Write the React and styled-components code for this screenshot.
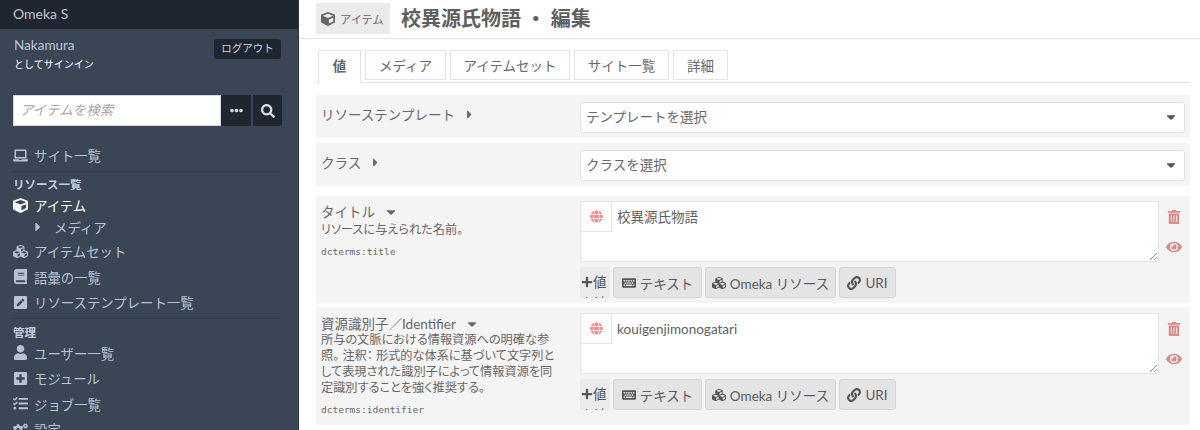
import React from 'react';
import styled, { createGlobalStyle } from 'styled-components';
import { FaCube, FaLaptop, FaCubes, FaBook, FaPenSquare, FaUser, FaPlusSquare, FaTasks, FaCogs, FaSearch, FaEllipsisH, FaGlobe, FaKeyboard, FaLink, FaTrashAlt, FaEye, FaPlus, FaCaretRight, FaCaretDown } from 'react-icons/fa';

const FONT = `Lato, "Noto Sans CJK JP", sans-serif`;

const Global = createGlobalStyle`
  html, body { margin: 0; padding: 0; background: #fff; overflow: hidden; }
  * { box-sizing: border-box; }
  body { font-family: ${FONT}; color: #676767; }
`;

const Page = styled.div`
  display: flex;
  width: 1200px;
  height: 430px;
  overflow: hidden;
`;

const Sidebar = styled.aside`
  flex: 0 0 299px;
  height: 430px;
  background: #3a4656;
  border-right: 1px solid #2c3440;
  overflow: hidden;
  color: #c3cedd;
`;

const Brand = styled.div`
  height: 29px;
  background: #1f2630;
  padding: 0 13px;
  font-size: 14px;
  line-height: 28px;
  color: #b9c4d3;
`;

const UserBlock = styled.div`
  display: flex;
  justify-content: space-between;
  padding: 10px 17px 0 14px;
  height: 66px;
`;

const UserName = styled.div`
  font-size: 13.5px;
  line-height: 12px;
  color: #b9c4d3;
  span {
    display: block;
    font-size: 10px;
    line-height: 12px;
    margin-top: 7px;
    color: #fff;
  }
`;

const Logout = styled.div`
  align-self: flex-start;
  height: 20px;
  width: 67px;
  background: #1f2630;
  border-radius: 3px;
  font-size: 10.5px;
  line-height: 19px;
  text-align: center;
  color: #ccd5e0;
`;

const Search = styled.div`
  display: flex;
  margin: 0 16px 0 13px;
  height: 31px;
`;

const SearchInput = styled.div`
  flex: 1;
  background: #fff;
  border: 1px solid #d8d8d8;
  font-size: 13.5px;
  font-style: italic;
  line-height: 29px;
  padding-left: 6px;
  color: #a5a5a5;
`;

const SearchBtn = styled.div`
  width: ${p => p.$w}px;
  margin-left: ${p => p.$ml || 0}px;
  background: #1f2630;
  border-radius: ${p => p.$round ? '0 3px 3px 0' : '0'};
  display: flex;
  align-items: center;
  justify-content: center;
  color: #d9e0e9;
  font-size: ${p => p.$fs}px;
`;

const Nav = styled.nav`
  padding: 0 17px 0 13px;
  margin-top: 16.5px;
`;

const NavRow = styled.div`
  display: flex;
  align-items: center;
  height: ${p => p.$h || 25.5}px;
  font-size: 13.4px;
  color: ${p => p.$active ? '#fff' : '#b9c4d3'};
  svg { flex: 0 0 auto; }
`;

const NavIcon = styled.span`
  flex: 0 0 21px;
  display: flex;
  align-items: center;
  font-size: 15px;
`;

const SubRow = styled(NavRow)`
  padding-left: 18px;
  height: 18px;
  margin-bottom: 2.5px;
  svg { font-size: 14px; margin-right: 9px; }
`;

const Section = styled.div`
  border-top: 1px solid #323d4c;
  margin-top: ${p => p.$mt}px;
  padding-top: ${p => p.$pt}px;
  font-size: 11.5px;
  font-weight: 700;
  line-height: 14px;
  color: #c3cedd;
`;

const Main = styled.main`
  flex: 1;
  min-width: 0;
`;

const Header = styled.header`
  display: flex;
  align-items: center;
  height: 39px;
  padding: 3px 10px 4px 17px;
  border-bottom: 1px solid #e4e4e4;
`;

const Crumb = styled.div`
  display: flex;
  align-items: center;
  width: 74px;
  height: 31px;
  background: #ebebeb;
  padding-left: 5px;
  font-size: 11.2px;
  color: #676767;
  svg { font-size: 14px; margin-right: 5px; }
`;

const Title = styled.h1`
  margin: 0 0 0 11px;
  font-size: 20px;
  font-weight: 700;
  color: #5f5f5f;
  line-height: 31px;
`;

const Tabs = styled.div`
  display: flex;
  margin: 11px 10px 0 17px;
  height: 33px;
  padding: 0 0 3px 2px;
  gap: 4px;
  border-bottom: 1px solid #dfdfdf;
`;

const Tab = styled.div`
  height: ${p => p.$active ? 33 : 30}px;
  width: ${p => p.$w}px;
  border: 1px solid #e4e4e4;
  border-bottom: ${p => p.$active ? 'none' : '1px solid #e4e4e4'};
  background: #fff;
  position: relative;
  z-index: 1;
  text-align: center;
  font-size: 13.5px;
  line-height: 30px;
  font-weight: ${p => p.$active ? 700 : 400};
  color: #676767;
`;

const Rows = styled.div`
  margin: 12px 10px 0 17px;
`;

const Row = styled.section`
  display: grid;
  grid-template-columns: 264px 1fr;
  background: #f4f4f4;
  height: 43px;
  margin-bottom: ${p => p.$mb}px;
  padding: 7px 5px 0 0;
  overflow: hidden;
`;

const Label = styled.div`
  padding: 5px 0 0 5px;
  font-size: 13.5px;
  line-height: 16px;
  color: #676767;
  svg { font-size: 13px; margin-left: 8px; vertical-align: -1px; }
`;

const Select = styled.div`
  position: relative;
  height: 31px;
  background: #fff;
  border: 1px solid #e2e2e2;
  border-radius: 3px;
  font-size: 13.5px;
  line-height: 29px;
  padding-left: 5px;
  color: #676767;
  svg { position: absolute; right: 6px; top: 7px; font-size: 14px; color: #555; }
`;

const Prop = styled.section`
  display: grid;
  grid-template-columns: 264px 1fr;
  background: #f4f4f4;
  height: ${p => p.$h}px;
  margin-bottom: ${p => p.$mb}px;
  padding-top: ${p => p.$pt}px;
`;

const PropInfo = styled.div`
  padding: 3px 12px 0 5px;
`;

const PropName = styled.div`
  font-size: 13.5px;
  line-height: 16px;
  color: #676767;
  svg { font-size: 14px; margin-left: 9px; vertical-align: -2px; }
`;

const PropDesc = styled.div`
  font-size: 12.2px;
  font-feature-settings: "palt";
  white-space: nowrap;
  line-height: 16px;
  margin-top: ${p => p.$gap}px;
  color: #676767;
`;

const Term = styled.div`
  font-family: "DejaVu Sans Mono", monospace;
  font-size: 9.5px;
  line-height: 12px;
  margin-top: 8px;
  color: #676767;
`;

const ValueCol = styled.div`
  min-width: 0;
`;

const ValueLine = styled.div`
  display: flex;
`;

const ValueBox = styled.div`
  position: relative;
  flex: 0 0 579px;
  height: 61px;
  background: #fff;
  border: 1px solid #e4e4e4;
  display: flex;
  align-items: flex-start;
`;

const Lang = styled.div`
  width: 31px;
  height: 30px;
  background: #fff;
  border-right: 1px solid #e4e4e4;
  border-bottom: 1px solid #e4e4e4;
  display: flex;
  align-items: center;
  justify-content: center;
  font-size: 13px;
  color: #f08a8a;
`;

const ValueText = styled.div`
  padding-left: 5px;
  font-size: 13.5px;
  line-height: 30px;
  color: #5f5f5f;
`;

const Grip = styled.svg`
  position: absolute;
  right: 1px;
  bottom: 1px;
  width: 8px;
  height: 8px;
`;

const Actions = styled.div`
  display: flex;
  flex-direction: column;
  align-items: center;
  flex: 0 0 30px;
  color: #d98a8a;
  svg:first-child { margin-top: 9px; font-size: 14px; }
  svg:last-child { margin-top: 15px; font-size: 16px; }
`;

const ButtonBar = styled.div`
  display: flex;
  gap: 3px;
  margin-top: 5px;
  height: 31px;
`;

const AddBtn = styled.div`
  width: 30px;
  height: 31px;
  overflow: hidden;
  background: #ebebeb;
  font-size: 13.5px;
  line-height: 21px;
  padding: 5px 0 0 1px;
  color: #555;
  word-break: break-all;
  svg { font-size: 12px; vertical-align: -1px; }
`;

const TypeBtn = styled.div`
  display: flex;
  align-items: center;
  justify-content: center;
  gap: 4px;
  width: ${p => p.$w}px;
  height: 31px;
  background: #e4e4e4;
  border: 1px solid #d4d4d4;
  border-radius: 3px;
  font-size: 13.5px;
  color: #5c5c5c;
  svg { font-size: 14px; color: #555; }
`;

function ValueEditor({ text }) {
  return (
    <ValueCol>
      <ValueLine>
        <ValueBox>
          <Lang><FaGlobe /></Lang>
          <ValueText>{text}</ValueText>
          <Grip viewBox="0 0 8 8"><path d="M1 8 L8 1 M5 8 L8 5" stroke="#999" strokeWidth="1" fill="none" /></Grip>
        </ValueBox>
        <Actions><FaTrashAlt /><FaEye /></Actions>
      </ValueLine>
      <ButtonBar>
        <AddBtn><FaPlus />値を追加</AddBtn>
        <TypeBtn $w={89}><FaKeyboard />テキスト</TypeBtn>
        <TypeBtn $w={131}><FaCubes />Omeka リソース</TypeBtn>
        <TypeBtn $w={57}><FaLink />URI</TypeBtn>
      </ButtonBar>
    </ValueCol>
  );
}

export default function App() {
  return (
    <Page>
      <Global />
      <Sidebar>
        <Brand>Omeka S</Brand>
        <UserBlock>
          <UserName>Nakamura<span>としてサインイン</span></UserName>
          <Logout>ログアウト</Logout>
        </UserBlock>
        <Search>
          <SearchInput>アイテムを検索</SearchInput>
          <SearchBtn $w={30} $fs={13}><FaEllipsisH /></SearchBtn>
          <SearchBtn $w={29} $ml={2} $fs={14} $round><FaSearch /></SearchBtn>
        </Search>
        <Nav>
          <NavRow $h={25}><NavIcon><FaLaptop /></NavIcon>サイト一覧</NavRow>
          <Section $mt={3.5} $pt={6}>リソース一覧</Section>
          <NavRow $h={26} $active><NavIcon><FaCube /></NavIcon>アイテム</NavRow>
          <SubRow><FaCaretRight />メディア</SubRow>
          <NavRow><NavIcon><FaCubes /></NavIcon>アイテムセット</NavRow>
          <NavRow><NavIcon><FaBook /></NavIcon>語彙の一覧</NavRow>
          <NavRow><NavIcon><FaPenSquare /></NavIcon>リソーステンプレート一覧</NavRow>
          <Section $mt={2.5} $pt={7}>管理</Section>
          <NavRow $h={26}><NavIcon><FaUser /></NavIcon>ユーザー一覧</NavRow>
          <NavRow><NavIcon><FaPlusSquare /></NavIcon>モジュール</NavRow>
          <NavRow><NavIcon><FaTasks /></NavIcon>ジョブ一覧</NavRow>
          <NavRow><NavIcon><FaCogs /></NavIcon>設定</NavRow>
        </Nav>
      </Sidebar>
      <Main>
        <Header>
          <Crumb><FaCube />アイテム</Crumb>
          <Title>校異源氏物語 ・ 編集</Title>
        </Header>
        <Tabs>
          <Tab $w={43} $active>値</Tab>
          <Tab $w={81}>メディア</Tab>
          <Tab $w={120}>アイテムセット</Tab>
          <Tab $w={95}>サイト一覧</Tab>
          <Tab $w={55}>詳細</Tab>
        </Tabs>
        <Rows>
          <Row $mb={5}>
            <Label>リソーステンプレート<FaCaretRight /></Label>
            <Select>テンプレートを選択<FaCaretDown /></Select>
          </Row>
          <Row $mb={10}>
            <Label>クラス<FaCaretRight /></Label>
            <Select>クラスを選択<FaCaretDown /></Select>
          </Row>
          <Prop $h={107} $mb={4} $pt={5}>
            <PropInfo>
              <PropName>タイトル<FaCaretDown /></PropName>
              <PropDesc $gap={2}>リソースに与えられた名前。</PropDesc>
              <Term>dcterms:title</Term>
            </PropInfo>
            <ValueEditor text="校異源氏物語" />
          </Prop>
          <Prop $h={118} $mb={0} $pt={6}>
            <PropInfo>
              <PropName>資源識別子／Identifier<FaCaretDown /></PropName>
              <PropDesc $gap={0}>所与の文脈における情報資源への明確な参<br />照。 注釈： 形式的な体系に基づいて文字列と<br />して表現された識別子によって情報資源を同<br />定識別することを強く推奨する。</PropDesc>
              <Term>dcterms:identifier</Term>
            </PropInfo>
            <ValueEditor text="kouigenjimonogatari" />
          </Prop>
        </Rows>
      </Main>
    </Page>
  );
}
